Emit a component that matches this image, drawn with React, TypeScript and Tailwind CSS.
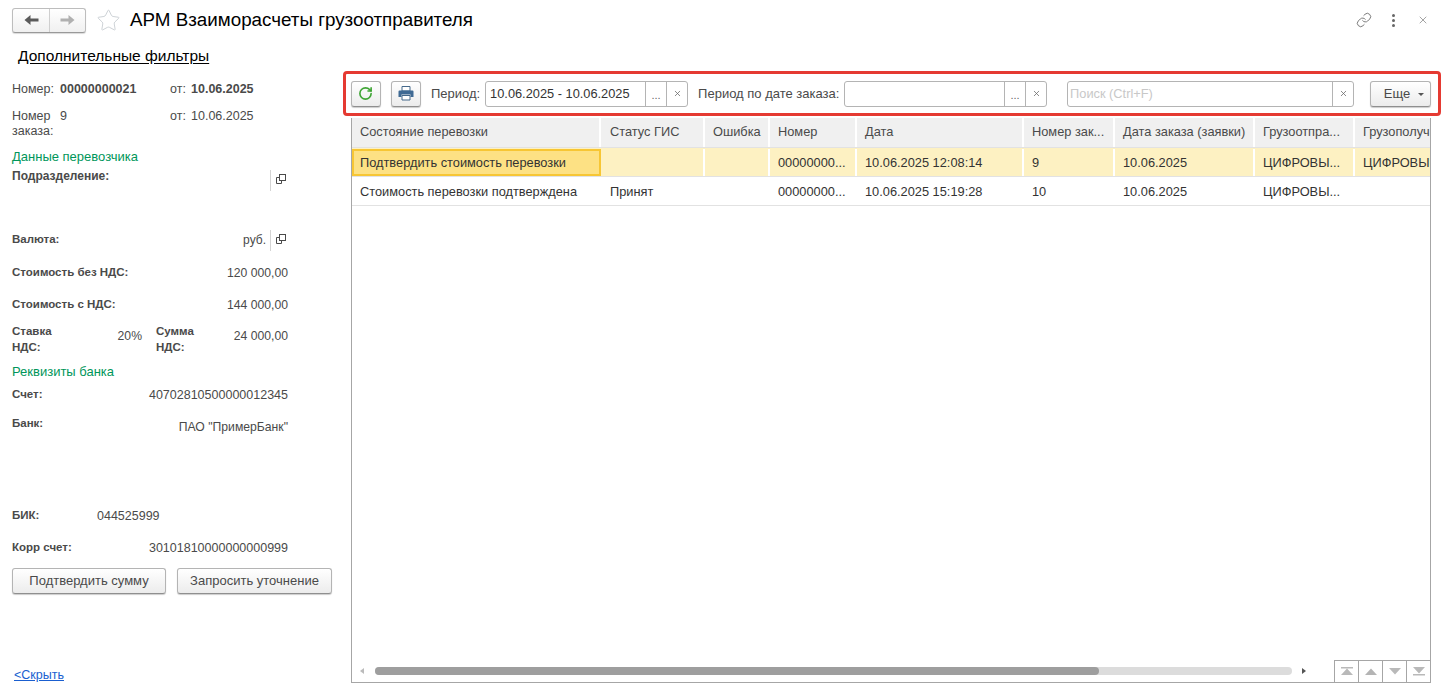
import { Star, Link, X, RotateCw } from 'lucide-react';

const font = { fontFamily: '"Liberation Sans", Arial, sans-serif' };

const columns = [
    { title: 'Состояние перевозки', width: 'w-[249px]', pad: 'pl-[8px]' },
    { title: 'Статус ГИС', width: 'w-[104px]', pad: 'pl-[9px]' },
    { title: 'Ошибка', width: 'w-[65px]', pad: 'pl-[8px]' },
    { title: 'Номер', width: 'w-[87px]', pad: 'pl-[8px]' },
    { title: 'Дата', width: 'w-[167px]', pad: 'pl-[8px]' },
    { title: 'Номер зак...', width: 'w-[91px]', pad: 'pl-[8px]' },
    { title: 'Дата заказа (заявки)', width: 'w-[140px]', pad: 'pl-[8px]' },
    { title: 'Грузоотпра...', width: 'w-[100px]', pad: 'pl-[8px]' },
    { title: 'Грузополучатель', width: 'w-[77px]', pad: 'pl-[8px]' },
];

const rows = [
    ['Подтвердить стоимость перевозки', '', '', '00000000...', '10.06.2025 12:08:14', '9', '10.06.2025', 'ЦИФРОВЫ...', 'ЦИФРОВЫЕ'],
    ['Стоимость перевозки подтверждена', 'Принят', '', '00000000...', '10.06.2025 15:19:28', '10', '10.06.2025', 'ЦИФРОВЫ...', ''],
];

function ArrowIcon({ dir, color }: { dir: 'left' | 'right'; color: string }) {
    return (
        <svg width="15" height="12" viewBox="0 0 15 12" className={dir === 'right' ? 'rotate-180' : ''}>
            <path d="M0.5 6 L6.5 1 V4.5 H14.5 V7.5 H6.5 V11 Z" fill={color} />
        </svg>
    );
}

function OpenIcon() {
    return (
        <svg width="10" height="10" viewBox="0 0 10 10" fill="none" stroke="#4a4a4a" strokeWidth="1">
            <rect x="3.5" y="0.5" width="6" height="6" />
            <path d="M3.5 3.5 H0.5 V9.5 H5.5 V6.5" />
        </svg>
    );
}

function PrinterIcon() {
    return (
        <svg width="16" height="15" viewBox="0 0 16 15">
            <path d="M4 0.5 H12 V5 H4 Z" fill="#fff" stroke="#44688a" />
            <path d="M1.5 4.5 H14.5 Q15.5 4.5 15.5 5.5 V11 H12.5 V8.5 H3.5 V11 H0.5 V5.5 Q0.5 4.5 1.5 4.5 Z" fill="#3f6a94" />
            <path d="M4 9.5 H12 V14 H4 Z" fill="#fff" stroke="#44688a" />
        </svg>
    );
}

function NavIcon({ kind }: { kind: 'first' | 'up' | 'down' | 'last' }) {
    const fill = kind === 'up' ? '#b4b4b4' : '#b9b9b9';
    if (kind === 'first') return <svg width="12" height="9" viewBox="0 0 12 9"><path d="M0 0 H12 V1.5 H0 Z M6 1.5 L12 8 H0 Z" fill={fill} /></svg>;
    if (kind === 'up') return <svg width="12" height="9" viewBox="0 0 12 9"><path d="M6 1.5 L12 8 H0 Z" fill={fill} /></svg>;
    if (kind === 'down') return <svg width="12" height="9" viewBox="0 0 12 9"><path d="M0 1 H12 L6 7.5 Z" fill={fill} /></svg>;
    return <svg width="12" height="9" viewBox="0 0 12 9"><path d="M0 0 H12 L6 6.5 Z M0 7 H12 V8.5 H0 Z" fill={fill} /></svg>;
}

function PushButton({ className, children }: { className: string; children: React.ReactNode }) {
    return (
        <button className={`flex items-center justify-center rounded-[3px] border border-[#b4b4b4] border-b-[#8f8f8f] bg-gradient-to-b from-white to-[#ececec] shadow-[0_1px_1px_rgba(0,0,0,0.2)] text-[#4a4a4a] ${className}`}>
            {children}
        </button>
    );
}

function FieldAction({ label }: { label: string }) {
    return (
        <div className="flex h-full w-[21px] items-center justify-center border-l border-[#b4b4b4] text-[#666] text-[11px]">
            {label === 'x' ? <X size={9} strokeWidth={2} /> : <span className="-mb-[3px]">...</span>}
        </div>
    );
}

function Field({ width, value, placeholder, actions }: { width: string; value?: string; placeholder?: string; actions: string[] }) {
    return (
        <div className={`flex h-[26px] shrink-0 items-center rounded-[3px] border border-[#b4b4b4] bg-white ${width}`}>
            <div className={`flex-1 truncate text-[12.8px] ${placeholder ? 'pl-[2px] text-[#c8c8c8]' : 'pl-[4px] text-[#333]'}`}>{value || placeholder}</div>
            {actions.map((a, i) => <FieldAction key={i} label={a} />)}
        </div>
    );
}

export default function App() {
    return (
        <div style={font} className="flex h-[693px] w-[1448px] flex-col overflow-hidden bg-white text-[12.5px] text-[#4a4a4a]">
            <div className="flex h-[40px] shrink-0 items-center pl-[12px] pr-[19px]">
                <div className="flex h-[25px] w-[74px] items-center rounded-[3px] border border-[#bdbdbd] border-b-[#999] bg-gradient-to-b from-white to-[#f0f0f0] shadow-[0_1px_1px_rgba(0,0,0,0.15)]">
                    <div className="flex h-full w-[37px] items-center justify-center border-r border-[#cfcfcf]"><ArrowIcon dir="left" color="#5a5a5a" /></div>
                    <div className="flex h-full flex-1 items-center justify-center"><ArrowIcon dir="right" color="#b0b0b0" /></div>
                </div>
                <Star size={25} strokeWidth={0.8} className="ml-[10px] text-[#c3c9ce]" />
                <div className="ml-[9px] text-[18.8px] text-black">АРМ Взаиморасчеты грузоотправителя</div>
                <div className="ml-auto flex items-center">
                    <Link size={16} strokeWidth={1.3} className="text-[#666]" />
                    <div className="ml-[20px] flex flex-col gap-[2px]">
                        <span className="h-[3px] w-[3px] rounded-full bg-[#666]" />
                        <span className="h-[3px] w-[3px] rounded-full bg-[#666]" />
                        <span className="h-[3px] w-[3px] rounded-full bg-[#666]" />
                    </div>
                    <X size={12} strokeWidth={1.2} className="ml-[22px] text-[#666]" />
                </div>
            </div>

            <div className="flex h-[31px] shrink-0 items-start pl-[18px] pt-[4px]">
                <span className="text-[15.5px] text-black underline underline-offset-2">Дополнительные фильтры</span>
            </div>

            <div className="flex min-h-0 flex-1">
                <div className="flex w-[343px] shrink-0 flex-col pb-[8px] pl-[12px]">
                    <div className="mt-[9px] flex h-[18px] items-center">
                        <span className="w-[48px]">Номер:</span>
                        <span className="w-[110px] font-bold">00000000021</span>
                        <span className="w-[21px]">от:</span>
                        <span className="font-bold">10.06.2025</span>
                    </div>
                    <div className="mt-[11px] flex h-[30px] items-start leading-[15px]">
                        <span className="w-[48px]">Номер заказа:</span>
                        <span className="w-[110px]">9</span>
                        <span className="w-[21px]">от:</span>
                        <span>10.06.2025</span>
                    </div>
                    <div className="mt-[10px] flex h-[16px] items-center text-[13px] text-[#00965a]">Данные перевозчика</div>

                    <div className="mt-[3px] flex h-[23px] w-[276px] items-start">
                        <span className="text-[12px] font-bold leading-[16px]">Подразделение:</span>
                        <div className="ml-auto mt-[2px] flex h-[21px] w-[18px] items-center justify-end border-l border-[#d4d4d4] pb-[3px] pr-[2px]"><OpenIcon /></div>
                    </div>
                    <div className="mt-[38px] flex h-[22px] w-[276px] items-center">
                        <span className="text-[11.5px] font-bold">Валюта:</span>
                        <span className="ml-auto text-[12px]">руб.</span>
                        <div className="ml-[4px] flex h-[21px] w-[18px] items-center justify-end border-l border-[#d4d4d4] pb-[3px] pr-[2px]"><OpenIcon /></div>
                    </div>
                    <div className="mt-[12px] flex h-[20px] w-[276px] items-center justify-between">
                        <span className="text-[11.5px] font-bold">Стоимость без НДС:</span>
                        <span className="text-[12.2px]">120 000,00</span>
                    </div>
                    <div className="mt-[12px] flex h-[20px] w-[276px] items-center justify-between">
                        <span className="text-[11.5px] font-bold">Стоимость с НДС:</span>
                        <span className="text-[12.2px]">144 000,00</span>
                    </div>
                    <div className="mt-[8px] flex h-[32px] w-[276px] items-start leading-[16px]">
                        <span className="w-[100px] text-[11.5px] font-bold">Ставка<br />НДС:</span>
                        <span className="w-[30px] pt-[5px] text-right text-[12.2px]">20%</span>
                        <span className="ml-[14px] w-[60px] text-[11.5px] font-bold">Сумма<br />НДС:</span>
                        <span className="ml-auto pt-[5px] text-[12.2px]">24 000,00</span>
                    </div>
                    <div className="mt-[9px] flex h-[16px] items-center text-[13px] text-[#00965a]">Реквизиты банка</div>
                    <div className="mt-[7px] flex h-[16px] w-[276px] items-center justify-between">
                        <span className="text-[11.5px] font-bold">Счет:</span>
                        <span>40702810500000012345</span>
                    </div>
                    <div className="mt-[12px] flex h-[16px] w-[276px] items-start justify-between">
                        <span className="text-[11.5px] font-bold">Банк:</span>
                        <span className="pt-[3px] text-[12.2px]">ПАО "ПримерБанк"</span>
                    </div>
                    <div className="mt-[77px] flex h-[16px] w-[276px] items-center">
                        <span className="w-[85px] text-[11.5px] font-bold">БИК:</span>
                        <span>044525999</span>
                    </div>
                    <div className="mt-[16px] flex h-[16px] w-[276px] items-center justify-between">
                        <span className="text-[11.5px] font-bold">Корр счет:</span>
                        <span>30101810000000000999</span>
                    </div>
                    <div className="mt-[12px] flex gap-[11px]">
                        <PushButton className="h-[26px] w-[154px] text-[13px]">Подтвердить сумму</PushButton>
                        <PushButton className="h-[26px] w-[155px] text-[13px]">Запросить уточнение</PushButton>
                    </div>
                    <a className="mt-auto pl-[2px] text-[#1a5fd0] underline">&lt;Скрыть</a>
                </div>

                <div className="flex min-w-0 flex-1 flex-col pb-[10px] pr-[7px]">
                    <div className="flex h-[45px] shrink-0 items-center rounded-[4px] border-[3px] border-[#e53a32] pl-[5px] pr-[7px]">
                        <PushButton className="h-[26px] w-[30px]"><RotateCw size={15} strokeWidth={2.6} className="text-[#3fa535]" /></PushButton>
                        <PushButton className="ml-[10px] h-[26px] w-[30px]"><PrinterIcon /></PushButton>
                        <span className="ml-[10px] text-[13px]">Период:</span>
                        <Field width="w-[203px] ml-[5px]" value="10.06.2025 - 10.06.2025" actions={['dots', 'x']} />
                        <span className="ml-[10px] w-[141px] shrink-0 whitespace-nowrap text-[13px]">Период по дате заказа:</span>
                        <Field width="w-[203px] ml-[5px]" actions={['dots', 'x']} />
                        <Field width="w-[287px] ml-[20px]" placeholder="Поиск (Ctrl+F)" actions={['x']} />
                        <PushButton className="ml-[16px] h-[26px] w-[61px] gap-[8px] pl-[7px] text-[13px]">
                            Еще
                            <span className="mt-[2px] border-x-[3px] border-t-[3px] border-x-transparent border-t-[#555]" />
                        </PushButton>
                    </div>

                    <div className="ml-[8px] mr-[10px] mt-[2px] flex min-h-0 flex-1 flex-col overflow-hidden border-x border-b border-[#a6a6a6]">
                        <div className="flex h-[30px] shrink-0 border-b border-[#e2e2e2] bg-[#f0f0f0]">
                            {columns.map((c) => (
                                <div key={c.title} className={`flex shrink-0 items-center overflow-hidden whitespace-nowrap border-r-2 border-white pb-[1px] text-[12.8px] ${c.pad} ${c.width}`}>{c.title}</div>
                            ))}
                        </div>
                        {rows.map((row, r) => (
                            <div key={r} className={`flex h-[29px] shrink-0 border-b border-[#e2e2e2] pt-[1px] text-[12.8px] text-[#333] ${r === 0 ? 'bg-[#fdf1c2]' : ''}`}>
                                {row.map((cell, i) => (
                                    <div key={i} className={`flex shrink-0 items-center overflow-hidden whitespace-nowrap ${columns[i].width} ${r === 0 ? 'border-r-2 border-white' : ''} ${r === 0 && i === 0 ? 'border-2 !border-[#f7c634] bg-[#fde184] pl-[6px]' : columns[i].pad}`}>{cell}</div>
                                ))}
                            </div>
                        ))}
                        <div className="flex-1" />
                        <div className="flex h-[22px] shrink-0 items-center">
                            <div className="flex flex-1 items-center pl-[8px] pr-[28px]">
                                <span className="border-y-[3px] border-r-[4px] border-y-transparent border-r-[#bbb]" />
                                <div className="mx-[10px] ml-[11px] h-[8px] flex-1 rounded-full bg-[#dcdcdc]">
                                    <div className="h-full w-[79%] rounded-full bg-[#9e9e9e]" />
                                </div>
                                <span className="border-y-[3px] border-l-[4px] border-y-transparent border-l-[#555]" />
                            </div>
                            <div className="flex h-full w-[96px] shrink-0 border-t border-[#a6a6a6]">
                                {(['first', 'up', 'down', 'last'] as const).map((k) => (
                                    <div key={k} className="flex flex-1 items-center justify-center border-l border-[#a6a6a6]"><NavIcon kind={k} /></div>
                                ))}
                            </div>
                        </div>
                    </div>
                </div>
            </div>
        </div>
    );
}
